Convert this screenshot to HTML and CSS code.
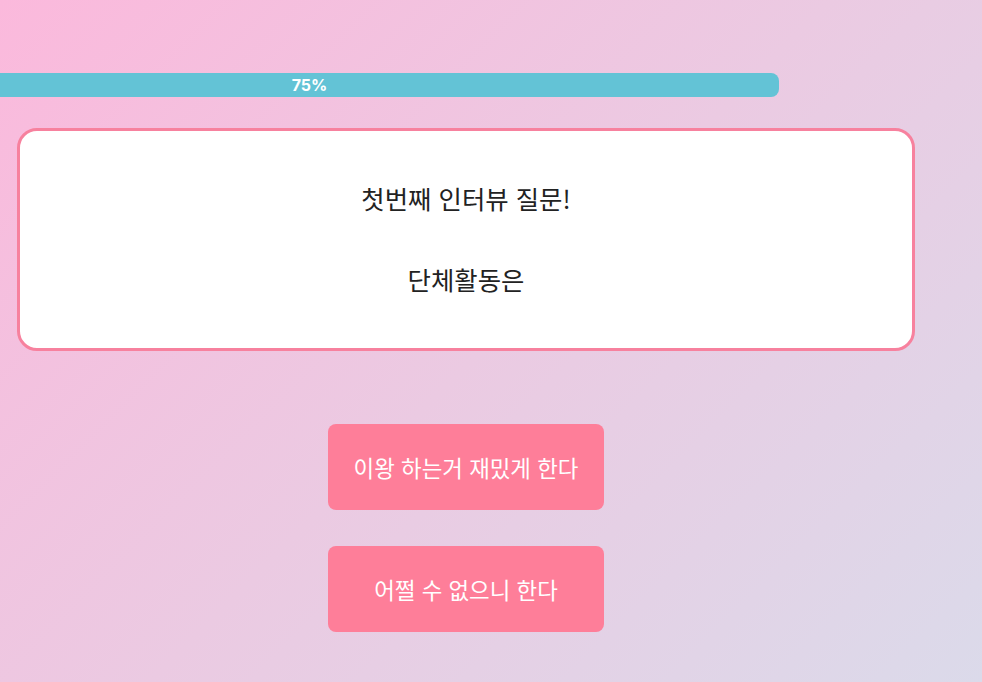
FILE: index.html
```html
<!DOCTYPE html>
<html lang="ko">
<head>
<meta charset="utf-8">
<title>인터뷰 질문</title>
<link rel="stylesheet" href="styles.css">
</head>
<body>
<div class="page">
  <div class="progress">
    <div class="progress-fill" style="width: 779px;"><span class="progress-label">75%</span></div>
  </div>
  <div class="content">
    <div class="card">
      <p class="card-line">첫번째 인터뷰 질문!</p>
      <p class="card-line">단체활동은</p>
    </div>
    <div class="choices">
      <button class="choice">이왕 하는거 재밌게 한다</button>
      <button class="choice">어쩔 수 없으니 한다</button>
    </div>
  </div>
</div>
</body>
</html>
```
FILE: styles.css
```css
html, body {
  margin: 0;
  padding: 0;
  height: 100%;
}
body {
  background: linear-gradient(135deg, #fbb9dc 0%, #ebcae2 50%, #dbdaea 100%);
  font-family: "Noto Sans CJK KR", "Noto Sans", sans-serif;
  overflow: hidden;
}
.page {
  padding-top: 73px;
}
.progress {
  height: 24px;
}
.progress-fill {
  height: 24px;
  background: #63c3d6;
  border-radius: 0 8px 8px 0;
  display: flex;
  align-items: center;
  justify-content: center;
  padding-right: 160px;
  box-sizing: border-box;
}
.progress-label {
  color: #ffffff;
  font-family: "Inter", "Liberation Sans", sans-serif;
  font-weight: 700;
  font-size: 16px;
  line-height: 24px;
}
.content {
  margin-top: 31px;
  margin-left: 17px;
  width: 898px;
}
.card {
  background: #ffffff;
  border: 3px solid #f7819e;
  border-radius: 20px;
  padding: 49px 20px 51px;
  display: flex;
  flex-direction: column;
  gap: 45px;
  align-items: center;
}
.card-line {
  margin: 0;
  font-size: 25.4px;
  line-height: 36px;
  color: #222222;
}
.choices {
  margin-top: 73px;
  display: flex;
  flex-direction: column;
  align-items: center;
  gap: 36px;
}
.choice {
  width: 276px;
  height: 86px;
  border: none;
  border-radius: 8px;
  background: #fe7e99;
  color: #ffffff;
  font-family: "Noto Sans CJK KR", "Noto Sans", sans-serif;
  font-size: 22.4px;
  padding: 0;
  cursor: pointer;
}
```
